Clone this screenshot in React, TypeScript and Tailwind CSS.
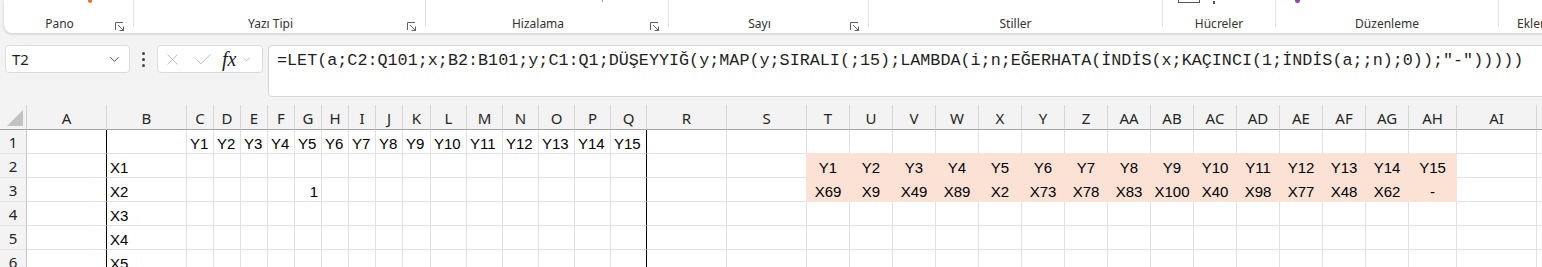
import { Check, ChevronDown, X } from 'lucide-react'

const COLS = [
  'A', 'B', 'C', 'D', 'E', 'F', 'G', 'H', 'I', 'J', 'K', 'L', 'M', 'N', 'O', 'P', 'Q', 'R', 'S',
  'T', 'U', 'V', 'W', 'X', 'Y', 'Z', 'AA', 'AB', 'AC', 'AD', 'AE', 'AF', 'AG', 'AH', 'AI', 'AJ',
]

const HEADS = Array.from({ length: 15 }, (_, i) => `Y${i + 1}`)
const MATCHES = ['X69', 'X9', 'X49', 'X89', 'X2', 'X73', 'X78', 'X83', 'X100', 'X40', 'X98', 'X77', 'X48', 'X62', '-']

const FORMULA =
  '=LET(a;C2:Q101;x;B2:B101;y;C1:Q1;DÜŞEYYIĞ(y;MAP(y;SIRALI(;15);LAMBDA(i;n;EĞERHATA(İNDİS(x;KAÇINCI(1;İNDİS(a;;n);0));"-")))))'

const GROUPS = [
  { label: 'Pano', w: 'w-[130px]', launcher: true },
  { label: 'Yazı Tipi', w: 'w-[292px]', launcher: true },
  { label: 'Hizalama', w: 'w-[243px]', launcher: true },
  { label: 'Sayı', w: 'w-[200px]', launcher: true },
  { label: 'Stiller', w: 'w-[294px]', launcher: false },
  { label: 'Hücreler', w: 'w-[113px]', launcher: false },
  { label: 'Düzenleme', w: 'w-[223px]', launcher: false },
]

function Launcher() {
  return (
    <svg width="10" height="10" viewBox="0 0 10 10" fill="none" stroke="#5f5f5f" strokeWidth="1">
      <path d="M0.5 8V0.5H8" />
      <path d="M3 3L8.5 8.5M4.5 8.5H8.5V4.5" />
    </svg>
  )
}

function Ribbon() {
  return (
    <div className="flex h-[33px] bg-[#f3f3f3] pl-[4px]">
      <div className="relative flex flex-1 rounded-b-[8px] bg-white shadow-[0_1px_3px_rgba(0,0,0,0.18)]">
        {/* bits of the icons cut off at the top */}
        <span className="absolute left-[84px] top-0 h-[3px] w-[4px] rounded-b-full bg-[#e8732c]" />
        <span className="absolute left-[598px] top-0 h-[2px] w-[1px] bg-[#9a9a9a]" />
        <span className="absolute left-[1174px] top-0 h-[3px] w-[22px] border-x border-b border-[#555]" />
        <span className="absolute left-[1209px] top-[1px] h-[3px] w-[2px] bg-[#555]" />
        <span className="absolute left-[1291px] top-0 h-[3px] w-[5px] rounded-b-full bg-[#9b3fb5]" />
        {GROUPS.map((g) => (
          <div key={g.label} className={`mb-[6px] flex shrink-0 border-r border-[#e3e3e3] ${g.w}`}>
            <div className="flex flex-1 items-end justify-center pb-[3px] text-[12px] leading-none text-[#333]">
              <span className="translate-y-[6px]">{g.label}</span>
            </div>
            {g.launcher && (
              <div className="flex w-[18px] items-end justify-start pb-[1px]">
                <span className="translate-y-[6px]">
                  <Launcher />
                </span>
              </div>
            )}
          </div>
        ))}
        <div className="flex flex-1 items-end overflow-hidden whitespace-nowrap pb-[3px] pl-[18px] text-[12px] leading-none text-[#333]">
          Eklentiler
        </div>
      </div>
    </div>
  )
}

function FormulaBar() {
  return (
    <div className="flex h-[72px] items-start bg-[#f3f3f3] pl-[5px] pt-[12px]">
      <div className="flex h-[28px] w-[125px] shrink-0 items-center justify-between rounded-[4px] border border-[#dcdcdc] bg-white pl-[6px] pr-[7px]">
        <span className="text-[15px] leading-none text-[#1f1f1f]">T2</span>
        <ChevronDown size={15} strokeWidth={1.5} color="#444" />
      </div>
      <div className="flex h-[28px] w-[27px] shrink-0 flex-col items-center justify-center gap-[3px]">
        <span className="h-[3px] w-[3px] rounded-full bg-[#444]" />
        <span className="h-[3px] w-[3px] rounded-full bg-[#444]" />
        <span className="h-[3px] w-[3px] rounded-full bg-[#444]" />
      </div>
      <div className="flex h-[28px] w-[106px] shrink-0 items-center rounded-[4px] border border-[#dcdcdc] bg-white pl-[5px]">
        <X size={19} strokeWidth={1.1} color="#b8b8b8" />
        <Check size={21} strokeWidth={1.1} color="#b8b8b8" className="ml-[11px]" />
        <span className="ml-[8px] font-['Liberation_Serif',serif] text-[20px] italic leading-none text-[#222]">fx</span>
        <ChevronDown size={11} strokeWidth={1.3} color="#8a8a8a" className="ml-[5px]" />
      </div>
      <div className="ml-[5px] h-[52px] w-[1290px] shrink-0 rounded-[4px] border border-[#d6d6d6] bg-white pl-[8px] pt-[5px] font-['Liberation_Mono',monospace] text-[16.75px] leading-[20px] whitespace-nowrap text-[#1f1f1f]">
        {FORMULA}
      </div>
    </div>
  )
}

function cellText(r: number, c: number) {
  if (r === 1 && c >= 2 && c <= 16) return HEADS[c - 2]
  if (c === 1 && r >= 2) return `X${r - 1}`
  if (r === 3 && c === 6) return '1'
  if (r === 2 && c >= 19 && c <= 33) return HEADS[c - 19]
  if (r === 3 && c >= 19 && c <= 33) return MATCHES[c - 19]
  return ''
}

function Cell({ r, c }: { r: number; c: number }) {
  const pink = (r === 2 || r === 3) && c >= 19 && c <= 33
  const text = cellText(r, c)
  let cls =
    'flex items-center overflow-visible whitespace-nowrap border-b border-r px-[3px] pt-[3px] text-[15px] leading-none text-black '
  cls += pink ? 'bg-[#fbe2d5] border-[#fbe2d5] justify-center ' : 'bg-white border-[#e1e1e1] '
  if (r === 3 && c === 6) cls += 'justify-end '
  if (r === 1 && c >= 19 && c <= 33) cls += 'border-b-[#fbe2d5] '
  if ((r === 2 || r === 3) && c === 18) cls += 'border-r-[#fbe2d5] '
  if (c === 0 || c === 16) cls += 'border-r-black '
  return <div className={cls}>{text}</div>
}

function Row({ r }: { r: number }) {
  return (
    <>
      <div className="flex items-center justify-center border-b border-r border-b-[#e1e1e1] border-r-[#c8c8c8] bg-[#f3f3f3] pt-[2px] font-['Noto_Sans',sans-serif] text-[15px] leading-none text-[#262626]">
        {r}
      </div>
      {COLS.map((_, c) => (
        <Cell key={c} r={r} c={c} />
      ))}
    </>
  )
}

function Sheet() {
  const rows = [1, 2, 3, 4, 5, 6]
  return (
    <div className="grid grid-cols-[27px_80px_80px_repeat(8,27px)_28px_repeat(6,36px)_80px_80px_repeat(14,43px)_48px_80px_80px] grid-rows-[25px_repeat(6,24px)] font-['Liberation_Sans',Arial,sans-serif]">
      <div className="flex items-end justify-end border-b border-r border-b-[#a3a3a3] border-r-[#d0d0d0] bg-[#f3f3f3] pb-[3px] pr-[3px]">
        <svg width="16" height="16" viewBox="0 0 16 16">
          <polygon points="16,0 16,16 0,16" fill="#c2c2c2" />
        </svg>
      </div>
      {COLS.map((col) => (
        <div
          key={col}
          className="flex items-center justify-center border-b border-r border-b-[#a3a3a3] border-r-[#d6d6d6] bg-[#f3f3f3] pt-[2px] font-['Noto_Sans',sans-serif] text-[15px] leading-none text-[#262626]"
        >
          {col}
        </div>
      ))}
      {rows.map((r) => (
        <Row key={r} r={r} />
      ))}
    </div>
  )
}

export default function App() {
  return (
    <div className="h-[267px] w-[1542px] overflow-hidden bg-[#f3f3f3] font-['Noto_Sans',sans-serif]">
      <Ribbon />
      <FormulaBar />
      <Sheet />
    </div>
  )
}
